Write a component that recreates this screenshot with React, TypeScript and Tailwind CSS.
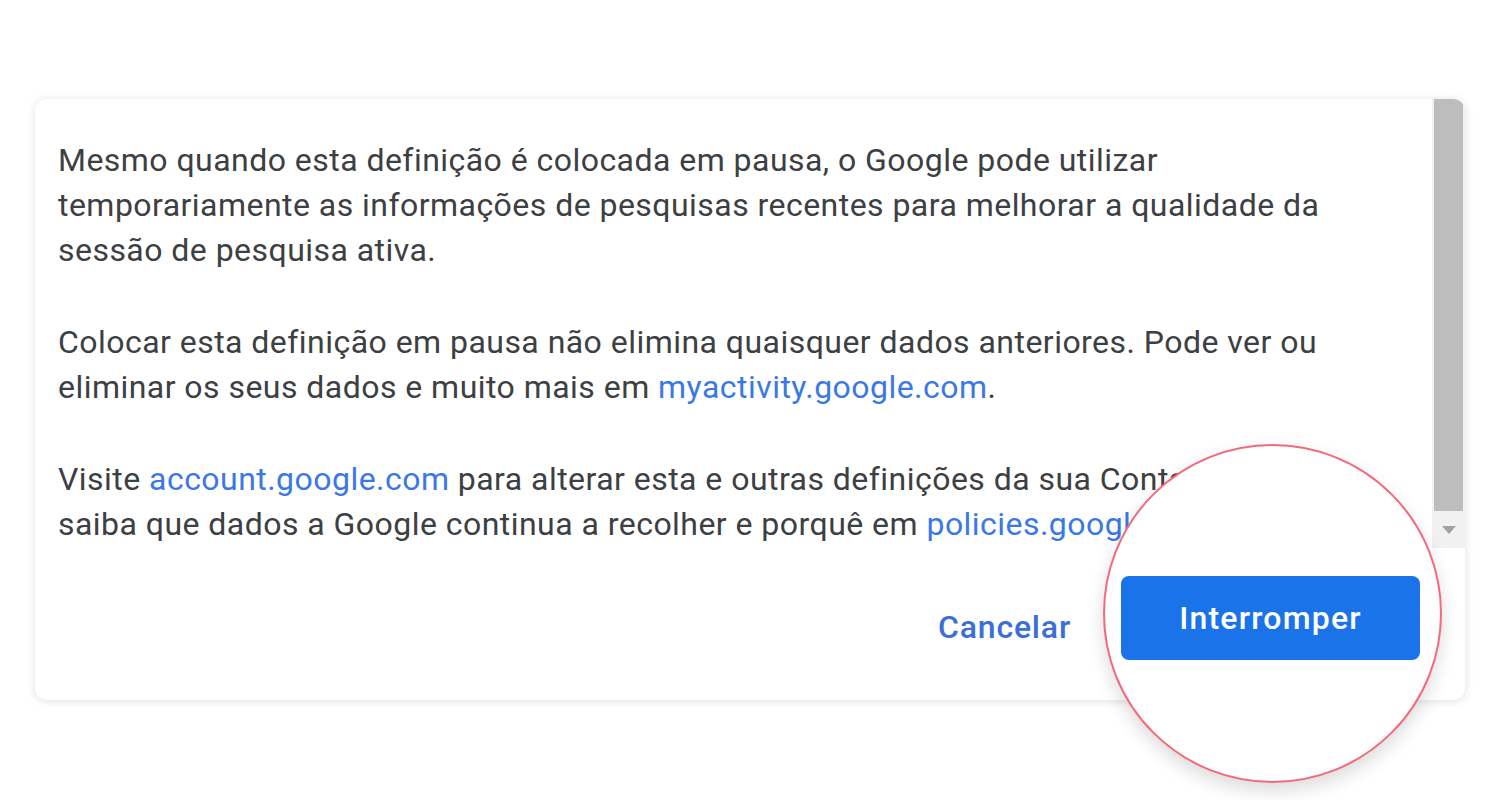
// Pause-activity confirmation dialog, shown zoomed with a magnifier
// circle over the primary action.

const LINK = "text-[#3b78e7]";

function Paragraph({ children, last }: { children: React.ReactNode; last?: boolean }) {
  return <p className={last ? "" : "mb-[47px]"}>{children}</p>;
}

export default function App() {
  return (
    <div className="min-h-[800px] w-[1500px] bg-white font-['Roboto',sans-serif]">
      <div className="relative pl-[35px] pt-[99px]">
        {/* Dialog card */}
        <div className="flex h-[601px] w-[1430px] flex-col overflow-hidden rounded-[12px] bg-white shadow-[0_1px_10px_rgba(0,0,0,0.13)]">
          {/* Scrolling body */}
          <div className="flex h-[449px]">
            <div className="flex-1 overflow-hidden whitespace-nowrap pl-[23px] pt-[39px] text-[32px] leading-[45px] tracking-[0.46px] text-[#3c4043]">
              <Paragraph>
                Mesmo quando esta definição é colocada em pausa, o Google pode utilizar
                <br />
                temporariamente as informações de pesquisas recentes para melhorar a qualidade da
                <br />
                sessão de pesquisa ativa.
              </Paragraph>
              <Paragraph>
                Colocar esta definição em pausa não elimina quaisquer dados anteriores. Pode ver ou
                <br />
                eliminar os seus dados e muito mais em <span className={LINK}>myactivity.google.com</span>.
              </Paragraph>
              <Paragraph last>
                Visite <span className={LINK}>account.google.com</span> para alterar esta e outras definições da sua Conta e
                <br />
                saiba que dados a Google continua a recolher e porquê em{" "}
                <span className={LINK}>policies.google.com</span>.
              </Paragraph>
            </div>
            {/* Scrollbar */}
            <div className="flex w-[33px] flex-col bg-[#f1f1f1]">
              <div className="mx-[2px] flex-1 bg-[#bdbdbd]" />
              <div className="flex h-[37px] items-center justify-center">
                <svg width="14" height="8" viewBox="0 0 14 8">
                  <path d="M0 0h14L7 8z" fill="#a3a3a3" />
                </svg>
              </div>
            </div>
          </div>
          {/* Footer actions */}
          <div className="flex flex-1 items-center justify-end gap-[50px] pr-[45px] pt-[6px]">
            <button type="button" className="text-[32px] font-medium tracking-[0.8px] text-[#3a6fd6]">
              Cancelar
            </button>
            <div className="h-[84px] w-[299px] rounded-[8px] bg-[#1a73e8]" />
          </div>
        </div>

        {/* Magnifier circle over the primary button */}
        <div className="absolute left-[1103px] top-[444px] flex h-[339px] w-[339px] items-center justify-center rounded-full border-2 border-[#f36a7c] bg-white shadow-[0_8px_18px_rgba(0,0,0,0.14)]">
          <button
            type="button"
            className="mr-[4px] mt-[9px] h-[84px] w-[299px] rounded-[8px] bg-[#1a73e8] text-[32px] font-medium tracking-[1.2px] text-white"
          >
            Interromper
          </button>
        </div>
      </div>
    </div>
  );
}
